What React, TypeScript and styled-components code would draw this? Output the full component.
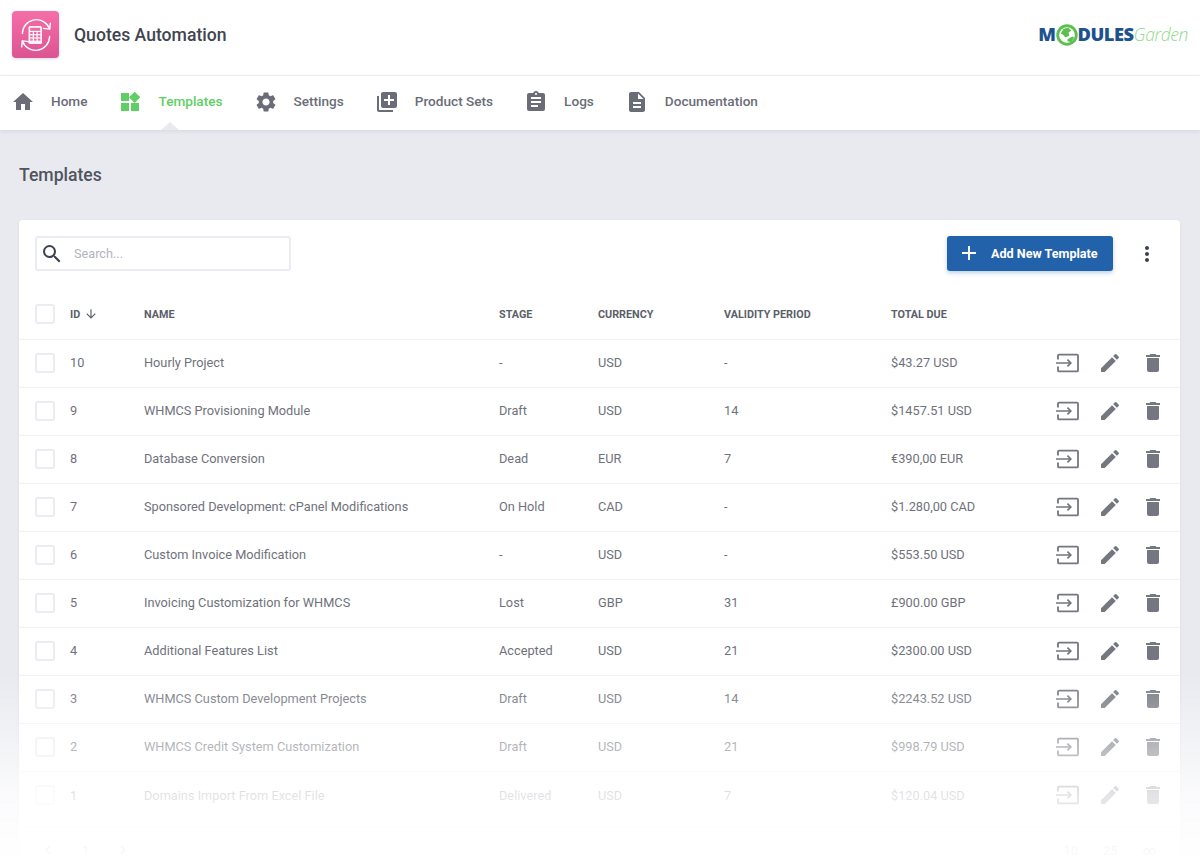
import React from "react";
import styled, { createGlobalStyle } from "styled-components";
import {
  MdHome,
  MdWidgets,
  MdSettings,
  MdLibraryAdd,
  MdAssignment,
  MdDescription,
  MdSearch,
  MdAdd,
  MdMoreVert,
  MdArrowDownward,
  MdEdit,
  MdDelete,
  MdChevronLeft,
  MdChevronRight,
} from "react-icons/md";

const GlobalStyle = createGlobalStyle`
  html, body {
    margin: 0;
    height: 860px;
    overflow: hidden;
    background: #e9eaf0;
    font-family: Roboto, "Liberation Sans", sans-serif;
  }
  * { box-sizing: border-box; }
`;

const navItems = [
  { label: "Home", icon: MdHome },
  { label: "Templates", icon: MdWidgets, active: true },
  { label: "Settings", icon: MdSettings },
  { label: "Product Sets", icon: MdLibraryAdd },
  { label: "Logs", icon: MdAssignment },
  { label: "Documentation", icon: MdDescription },
];

const rows = [
  { id: 10, name: "Hourly Project", stage: "-", currency: "USD", validity: "-", total: "$43.27 USD" },
  { id: 9, name: "WHMCS Provisioning Module", stage: "Draft", currency: "USD", validity: "14", total: "$1457.51 USD" },
  { id: 8, name: "Database Conversion", stage: "Dead", currency: "EUR", validity: "7", total: "€390,00 EUR" },
  { id: 7, name: "Sponsored Development: cPanel Modifications", stage: "On Hold", currency: "CAD", validity: "-", total: "$1.280,00 CAD" },
  { id: 6, name: "Custom Invoice Modification", stage: "-", currency: "USD", validity: "-", total: "$553.50 USD" },
  { id: 5, name: "Invoicing Customization for WHMCS", stage: "Lost", currency: "GBP", validity: "31", total: "£900.00 GBP" },
  { id: 4, name: "Additional Features List", stage: "Accepted", currency: "USD", validity: "21", total: "$2300.00 USD" },
  { id: 3, name: "WHMCS Custom Development Projects", stage: "Draft", currency: "USD", validity: "14", total: "$2243.52 USD" },
  { id: 2, name: "WHMCS Credit System Customization", stage: "Draft", currency: "USD", validity: "21", total: "$998.79 USD" },
  { id: 1, name: "Domains Import From Excel File", stage: "Delivered", currency: "USD", validity: "7", total: "$120.04 USD" },
];

function AppLogo() {
  return (
    <svg width="30" height="34" viewBox="0 0 30 34" fill="none">
      <g transform="translate(0 2)">
        <rect x="7.5" y="6" width="13.5" height="18" rx="1.5" fill="#fff" fillOpacity="0.92" />
        <rect x="9.2" y="7.8" width="10" height="3" fill="#ea6aa3" />
        <g fill="#ea6aa3">
          <rect x="9.2" y="12" width="2.5" height="2" />
          <rect x="13" y="12" width="2.5" height="2" />
          <rect x="16.8" y="12" width="2.5" height="2" />
          <rect x="9.2" y="15.3" width="2.5" height="2" />
          <rect x="13" y="15.3" width="2.5" height="2" />
          <rect x="16.8" y="15.3" width="2.5" height="2" />
          <rect x="9.2" y="18.6" width="2.5" height="2" />
          <rect x="13" y="18.6" width="2.5" height="2" />
          <rect x="16.8" y="18.6" width="2.5" height="2" />
        </g>
        <path d="M1.4 13.5A14 14 0 0 1 28.6 9" stroke="#fff" strokeWidth="1.4" strokeLinecap="round" />
        <path d="M22.5 8.4l6.2.7.6-6" stroke="#fff" strokeWidth="1.4" strokeLinecap="round" strokeLinejoin="round" />
        <path d="M28.6 16.5A14 14 0 0 1 1.4 21" stroke="#fff" strokeWidth="1.4" strokeLinecap="round" />
        <path d="M7.5 21.6l-6.2-.7-.6 6" stroke="#fff" strokeWidth="1.4" strokeLinecap="round" strokeLinejoin="round" />
      </g>
    </svg>
  );
}

function GlobeO() {
  return (
    <svg width="22" height="22" viewBox="0 0 23 23">
      <circle cx="11.5" cy="11.5" r="9.7" fill="#fff" stroke="#5cc04f" strokeWidth="3" />
      <path d="M8 5l5-1 3 3-3 2 1 3-4 2-3-3-2-1zM12 16l5-3 2 1-3 5-4-1z" fill="#5cc04f" />
    </svg>
  );
}

function EnterIcon() {
  return (
    <svg width="24" height="20" viewBox="0 0 24 20" fill="none" stroke="currentColor" strokeWidth="1.8">
      <path d="M3 6.5V2.6c0-.6.4-1 1-1h18c.6 0 1 .4 1 1v14.8c0 .6-.4 1-1 1H4c-.6 0-1-.4-1-1v-3.9" />
      <path d="M1 10h14.5M12.4 6.6l3.4 3.4-3.4 3.4" strokeWidth="1.7" />
    </svg>
  );
}

export default function App() {
  return (
    <>
      <GlobalStyle />
      <TopBar>
        <Brand>
          <LogoTile>
            <AppLogo />
          </LogoTile>
          <BrandName>Quotes Automation</BrandName>
        </Brand>
        <VendorLogo>
          <VendorBold>M</VendorBold>
          <GlobeO />
          <VendorBold>DULES</VendorBold>
          <VendorLight>Garden</VendorLight>
        </VendorLogo>
      </TopBar>
      <NavBar>
        {navItems.map((item) => (
          <NavItem key={item.label} $active={item.active}>
            <item.icon size={24} />
            <span>{item.label}</span>
          </NavItem>
        ))}
      </NavBar>
      <Main>
        <PageTitle>Templates</PageTitle>
        <Card>
          <Toolbar>
            <SearchBox>
              <MdSearch size={24} color="#3b4150" />
              <SearchInput placeholder="Search..." />
            </SearchBox>
            <ToolbarActions>
              <AddButton>
                <MdAdd size={24} />
                Add New Template
              </AddButton>
              <MoreButton>
                <MdMoreVert size={24} />
              </MoreButton>
            </ToolbarActions>
          </Toolbar>
          <HeadRow>
            <Checkbox />
            <SortCell>
              ID <MdArrowDownward size={14} />
            </SortCell>
            <div>Name</div>
            <div>Stage</div>
            <div>Currency</div>
            <div>Validity Period</div>
            <div>Total Due</div>
          </HeadRow>
          {rows.map((row) => (
            <Row key={row.id}>
              <Checkbox />
              <div>{row.id}</div>
              <div>{row.name}</div>
              <div>{row.stage}</div>
              <div>{row.currency}</div>
              <div>{row.validity}</div>
              <div>{row.total}</div>
              <RowActions>
                <EnterIcon />
                <MdEdit size={24} />
                <MdDelete size={24} />
              </RowActions>
            </Row>
          ))}
          <Pagination>
            <PageGroup>
              <MdChevronLeft size={18} />
              <span>1</span>
              <MdChevronRight size={18} />
            </PageGroup>
            <PageGroup>
              <span>10</span>
              <span>25</span>
              <span>∞</span>
            </PageGroup>
          </Pagination>
        </Card>
      </Main>
      <BottomFade />
    </>
  );
}

const TopBar = styled.header`
  height: 76px;
  background: #fff;
  border-bottom: 1px solid #f1f2f5;
  display: flex;
  align-items: center;
  justify-content: space-between;
  padding: 0 12px 6px 12px;
`;

const Brand = styled.div`
  display: flex;
  align-items: center;
  gap: 15px;
`;

const LogoTile = styled.div`
  width: 47px;
  height: 47px;
  border-radius: 4px;
  background: linear-gradient(180deg, #f56ea8 0%, #dc5593 100%);
  box-shadow: 0 1px 3px rgba(0, 0, 0, 0.15);
  display: flex;
  align-items: center;
  justify-content: center;
`;

const BrandName = styled.div`
  font-size: 17.6px;
  font-weight: 500;
  color: #41454f;
`;

const VendorLogo = styled.div`
  display: flex;
  align-items: center;
  font-family: "Open Sans", "Liberation Sans", sans-serif;
  line-height: 1;
`;

const VendorBold = styled.span`
  font-size: 18.3px;
  font-weight: 800;
  letter-spacing: -0.5px;
  color: #1d528f;
`;

const VendorLight = styled.span`
  font-size: 17.5px;
  font-weight: 300;
  font-style: italic;
  letter-spacing: -0.4px;
  color: #93d98d;
`;

const NavBar = styled.nav`
  height: 54px;
  background: #fff;
  box-shadow: 0 1px 4px rgba(60, 65, 90, 0.12);
  display: flex;
  align-items: center;
  gap: 31px;
  padding-left: 11px;
  position: relative;
`;

const NavItem = styled.a<{ $active?: boolean }>`
  position: relative;
  height: 100%;
  display: flex;
  align-items: center;
  gap: 16px;
  padding-bottom: 3px;
  font-size: 13.6px;
  font-weight: 500;
  color: ${(p) => (p.$active ? "#5fcf65" : "#6a6d78")};

  span {
    margin-bottom: 2px;
  }

  ${(p) =>
    p.$active &&
    `
    &::after {
      content: "";
      position: absolute;
      left: 50%;
      bottom: 0;
      margin-left: -9px;
      width: 0;
      height: 0;
      border-left: 9px solid transparent;
      border-right: 9px solid transparent;
      border-bottom: 8px solid #e9eaf0;
    }
  `}
`;

const Main = styled.main`
  padding: 0 20px 0 19px;
`;

const PageTitle = styled.h1`
  margin: 0;
  padding: 35px 0 34px;
  font-size: 17.6px;
  line-height: 21px;
  font-weight: 500;
  color: #50545e;
`;

const Card = styled.section`
  background: #fff;
  border-radius: 4px;
  box-shadow: 0 1px 3px rgba(60, 65, 90, 0.08);
`;

const Toolbar = styled.div`
  display: flex;
  justify-content: space-between;
  align-items: center;
  padding: 16px 21px 0 16px;
  height: 51px;
`;

const SearchBox = styled.label`
  width: 256px;
  height: 35px;
  border: 2px solid #ebecf1;
  border-radius: 3px;
  display: flex;
  align-items: center;
  gap: 8px;
  padding-left: 3px;
`;

const SearchInput = styled.input`
  border: 0;
  outline: 0;
  min-width: 0;
  flex: 1;
  font: 400 12.7px Roboto, sans-serif;
  color: #6a6d78;

  &::placeholder {
    color: #b3b5bc;
  }
`;

const ToolbarActions = styled.div`
  display: flex;
  align-items: center;
  gap: 22px;
`;

const AddButton = styled.button`
  width: 166px;
  height: 35px;
  border: 0;
  border-radius: 3px;
  background: #2262ab;
  box-shadow: 0 2px 4px rgba(34, 98, 171, 0.3);
  color: #fff;
  font: 700 12.6px Roboto, sans-serif;
  display: flex;
  align-items: center;
  gap: 10px;
  padding: 0 0 1px 10px;
`;

const MoreButton = styled.span`
  display: flex;
  color: #3b4150;
`;

const gridColumns = "35px 74px 355px 99px 126px 167px 1fr auto";

const HeadRow = styled.div`
  display: grid;
  grid-template-columns: ${gridColumns};
  align-items: center;
  height: 69px;
  padding: 18px 0 0 16px;
  border-bottom: 1px solid #f1f2f5;
  font-size: 10.8px;
  font-weight: 700;
  text-transform: uppercase;
  color: #5b5f6a;
`;

const SortCell = styled.div`
  display: flex;
  align-items: center;
  gap: 4px;
`;

const Row = styled.div`
  display: grid;
  grid-template-columns: ${gridColumns};
  align-items: center;
  height: 48px;
  padding: 0 15px 2px 16px;
  border-bottom: 1px solid #f1f2f5;
  font-size: 12.75px;
  color: #6f727c;

  &:nth-last-child(2) {
    border-bottom: 0;
  }
`;

const Checkbox = styled.span`
  display: block;
  width: 20px;
  height: 20px;
  border: 2px solid #ebecf1;
  border-radius: 3px;
`;

const RowActions = styled.div`
  display: flex;
  align-items: center;
  gap: 19px;
  color: #747780;
`;

const Pagination = styled.div`
  display: flex;
  justify-content: space-between;
  margin-top: 6px;
  border-top: 1px solid #f1f2f5;
  padding: 14px 24px 24px 20px;
  font-size: 13px;
  color: #6f727c;
`;

const PageGroup = styled.div`
  display: flex;
  align-items: center;
  gap: 25px;
`;

const BottomFade = styled.div`
  position: fixed;
  left: 0;
  right: 0;
  bottom: 0;
  height: 190px;
  pointer-events: none;
  background: linear-gradient(
    180deg,
    rgba(255, 255, 255, 0) 0%,
    rgba(255, 255, 255, 0.5) 42%,
    rgba(255, 255, 255, 0.8) 66%,
    rgba(255, 255, 255, 0.97) 100%
  );
`;
